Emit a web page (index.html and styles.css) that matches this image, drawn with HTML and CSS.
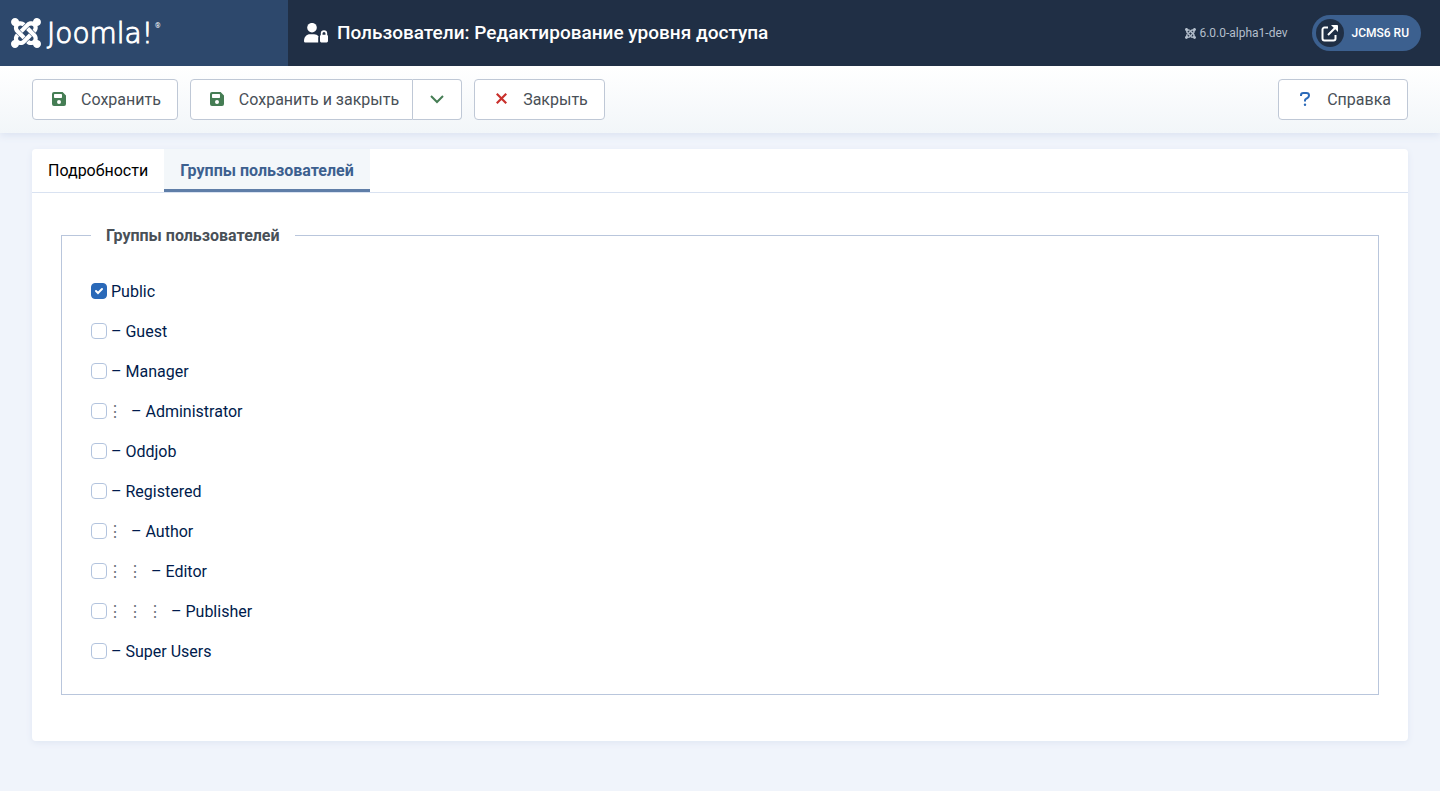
FILE: index.html
```html
<!DOCTYPE html>
<html lang="ru">
<head>
<meta charset="utf-8">
<meta name="viewport" content="width=device-width, initial-scale=1">
<title>Пользователи: Редактирование уровня доступа</title>
<link rel="stylesheet" href="styles.css">
</head>
<body>
<svg class="sprite" aria-hidden="true">
  <symbol id="joomla" viewBox="0 32 448 448"><path d="M.6 92.1C.6 58.8 27.4 32 60.4 32c30 0 54.5 21.9 59.2 50.2 32.6-7.6 67.1.6 96.5 30l-44.3 44.3c-20.5-20.5-42.6-16.3-55.4-3.5-14.3 14.3-14.3 37.9 0 52.2l99.5 99.5-44 44.3c-87.7-87.2-49.7-49.7-99.8-99.7-26.8-26.5-35-64.8-24.8-98.9C20.4 144.6.6 120.7.6 92.1zm129.5 116.4l44.3 44.3c10-10 89.7-89.7 99.7-99.8 14.3-14.3 37.6-14.3 51.9 0 12.8 12.8 17 35-3.5 55.4l44 44.3c31.2-31.2 38.5-67.6 28.9-101.2 29.2-4.1 51.9-29.2 51.9-59.5 0-33.2-26.8-60.1-59.8-60.1-30.3 0-55.4 22.5-59.5 51.6-33.8-9.9-71.7-1.5-98.3 25.1-18.3 19.1-71.1 71.5-99.6 99.9zm266.3 152.2c8.2-32.7-.9-68.5-26.3-93.9-11.8-12.2 5 4.7-99.5-99.7l-44.3 44.3 99.7 99.7c14.3 14.3 14.3 37.6 0 51.9-12.8 12.8-35 17-55.4-3.5l-44 44.3c27.6 30.2 68 38.8 102.7 28 5.5 27.4 29.7 48.1 58.9 48.1 33 0 59.8-26.8 59.8-60.1 0-30.2-22.5-55-51.6-59.1zm-84.3-53.1l-44-44.3c-87 86.4-50.4 50.4-99.7 99.8-14.3 14.3-37.6 14.3-51.9 0-13.1-13.4-16.9-35.3 3.2-55.4l-44-44.3c-30.2 30.2-38 65.2-29.5 98.3-26.7 6-46.2 29.9-46.2 58.2C0 453.2 26.8 480 59.8 480c28.6 0 52.5-19.8 58.6-46.7 32.7 8.2 68.5-.6 94.2-26 32.1-32 12.2-12.4 99.5-99.7z"/></symbol>
  <symbol id="save" viewBox="0 0 14 14"><path fill-rule="evenodd" d="M2 0h8.600l3.400 3.400V12a2 2 0 0 1-2 2H2a2 2 0 0 1-2-2V2a2 2 0 0 1 2-2zm.7 2a.7.7 0 0 0-.7.7v2.600c0 .4.300.7.7.7h6.600a.7.7 0 0 0 .7-.7V2.700a.7.7 0 0 0-.7-.7zM7 8a2 2 0 1 0 0 4 2 2 0 0 0 0-4z"/></symbol>
</svg>

<header class="header">
  <a class="logo" href="#" aria-label="Joomla!">
    <svg class="logo-mark" aria-hidden="true"><use href="#joomla"/></svg>
    <span class="logo-word">Joomla!</span><sup class="logo-reg">®</sup>
  </a>
  <div class="header-main">
    <h1 class="page-title">
      <svg class="title-icon" viewBox="0 0 24 20" aria-hidden="true"><circle cx="8" cy="4.700" r="4.800"/><path d="M0 18.200C0 14 2.600 11.300 6 11.300h4c1.900 0 3.500.8 4.600 2.200-.3.400-.4.900-.4 1.500V19.400H1.200A1.200 1.200 0 0 1 0 18.200z"/><path fill-rule="evenodd" d="M16.800 11.900v-1.400a3.200 3.200 0 0 1 6.400 0v1.400c.5.200.8.600.8 1.200v5a1.300 1.300 0 0 1-1.300 1.300h-5.400a1.300 1.300 0 0 1-1.300-1.300v-5c0-.6.300-1 .8-1.200zm1.700-.1h3v-1.300a1.500 1.500 0 0 0-3 0z"/></svg>
      Пользователи: Редактирование уровня доступа
    </h1>
    <div class="header-tools">
      <span class="version"><svg class="version-icon" aria-hidden="true"><use href="#joomla"/></svg>6.0.0-alpha1-dev</span>
      <a class="site-link" href="#">
        <span class="site-icon"><svg viewBox="0 0 17 17" aria-hidden="true"><path d="M7 2.500H3.500A2 2 0 0 0 1.500 4.500v9a2 2 0 0 0 2 2h9a2 2 0 0 0 2-2V10M7 10l7-7" fill="none" stroke="currentColor" stroke-width="2"/><path d="M10 0h6a1 1 0 0 1 1 1v6l-2.200-2.200-2.600-2.600z"/></svg></span>
        JCMS6 RU
      </a>
    </div>
  </div>
</header>

<div class="toolbar" role="toolbar" aria-label="Панель инструментов">
  <button type="button" class="btn"><span class="btn-icon green"><svg class="save-icon" aria-hidden="true"><use href="#save"/></svg></span>Сохранить</button>
  <div class="btn-group">
    <button type="button" class="btn"><span class="btn-icon green"><svg class="save-icon" aria-hidden="true"><use href="#save"/></svg></span>Сохранить и закрыть</button>
    <button type="button" class="btn btn-toggle" aria-label="Другие действия"><svg class="chevron" viewBox="0 0 14 9" aria-hidden="true"><path d="M1 1l6 6 6-6"/></svg></button>
  </div>
  <button type="button" class="btn"><span class="btn-icon red"><svg class="cross" viewBox="0 0 10 10" aria-hidden="true"><path d="M.7.7l8.600 8.600M9.300.7L.7 9.300"/></svg></span>Закрыть</button>
  <button type="button" class="btn btn-help"><span class="btn-icon blue"><svg class="question" viewBox="0 0 10 14" aria-hidden="true"><path d="M1 4V3.200C1 1.800 2 1 3.400 1h3C8 1 9 2 9 3.400c0 1-.5 1.800-1.400 2.400L6 6.800c-.7.400-1 .9-1 1.700V9.500"/><circle cx="5" cy="12.700" r="1.200"/></svg></span>Справка</button>
</div>

<main class="content">
  <div class="panel">
    <div class="tabs" role="tablist">
      <button type="button" class="tab" role="tab" aria-selected="false">Подробности</button>
      <button type="button" class="tab tab-active" role="tab" aria-selected="true">Группы пользователей</button>
    </div>
    <form class="tab-body">
      <fieldset class="groups">
        <legend class="groups-title">Группы пользователей</legend>
        <div class="group-list">
          <label class="group"><input class="check" type="checkbox" checked><span class="group-name">Public</span></label>
          <label class="group"><input class="check" type="checkbox"><span class="group-name">– Guest</span></label>
          <label class="group"><input class="check" type="checkbox"><span class="group-name">– Manager</span></label>
          <label class="group"><input class="check" type="checkbox"><span class="group-name"><span class="level">⋮</span>– Administrator</span></label>
          <label class="group"><input class="check" type="checkbox"><span class="group-name">– Oddjob</span></label>
          <label class="group"><input class="check" type="checkbox"><span class="group-name">– Registered</span></label>
          <label class="group"><input class="check" type="checkbox"><span class="group-name"><span class="level">⋮</span>– Author</span></label>
          <label class="group"><input class="check" type="checkbox"><span class="group-name"><span class="level">⋮</span><span class="level">⋮</span>– Editor</span></label>
          <label class="group"><input class="check" type="checkbox"><span class="group-name"><span class="level">⋮</span><span class="level">⋮</span><span class="level">⋮</span>– Publisher</span></label>
          <label class="group"><input class="check" type="checkbox"><span class="group-name">– Super Users</span></label>
        </div>
      </fieldset>
    </form>
  </div>
</main>
</body>
</html>
```
FILE: styles.css
```css
* { box-sizing: border-box; }

body {
  margin: 0;
  min-height: 100vh;
  background: #f0f4fb;
  color: #001b4c;
  font-family: Roboto, "Liberation Sans", sans-serif;
  font-size: 16px;
  line-height: 24px;
}

svg { display: block; fill: currentColor; }
.sprite { display: none; }

.header {
  position: relative;
  z-index: 1;
  display: flex;
  min-height: 66px;
  background: #202f45;
  color: #fff;
}

.logo {
  display: flex;
  align-items: center;
  flex: 0 0 288px;
  padding: 0 11px;
  background: #2d486c;
  color: #fff;
  text-decoration: none;
}
.logo-mark { width: 30px; height: 30px; margin-right: 6px; }
.logo-word {
  padding-top: 2px;
  font-family: "DejaVu Sans", sans-serif;
  font-size: 28px;
  font-weight: 200;
  line-height: 32px;
  -webkit-text-stroke: 1px #fff;
}
.logo-reg { align-self: flex-start; margin: 22px 0 0 2px; font-size: 7px; line-height: 8px; }

.header-main {
  display: flex;
  flex: 1;
  align-items: center;
  justify-content: space-between;
  padding: 0 19px 0 16px;
}
.page-title {
  display: flex;
  align-items: center;
  gap: 9px;
  margin: 0;
  font-size: 19px;
  font-weight: 500;
}
.title-icon { width: 24px; height: 20px; }

.header-tools { display: flex; align-items: center; gap: 24px; }
.version {
  display: flex;
  align-items: center;
  gap: 3px;
  color: #b4bfcc;
  font-size: 12px;
}
.version-icon { width: 11px; height: 11px; }
.site-link {
  display: flex;
  align-items: center;
  gap: 8px;
  height: 36px;
  padding: 0 12px 0 4px;
  border-radius: 18px;
  background: #3c608f;
  color: #fff;
  font-size: 12px;
  font-weight: 500;
  text-decoration: none;
}
.site-icon {
  display: grid;
  place-items: center;
  width: 28px;
  height: 28px;
  border-radius: 50%;
  background: #202f45;
}
.site-icon svg { width: 17px; height: 17px; }

.toolbar {
  display: flex;
  gap: 12px;
  padding: 13px 32px;
  background: linear-gradient(#fff, #f2f6f9);
  box-shadow: 0 2px 8px #d9e1f0;
}
.btn {
  display: flex;
  align-items: center;
  height: 41px;
  padding: 0 16px;
  border: 1px solid #bfc8d6;
  border-radius: 4px;
  background: #fff;
  color: #495057;
  font: inherit;
}
.btn-icon { display: grid; place-items: center; width: 20px; margin-right: 12px; padding-bottom: 2px; }
.save-icon { width: 14px; height: 14px; }
.green { color: #457d54; }
.red { color: #c9302c; }
.blue { color: #2a69b8; }
.btn-group { display: flex; }
.btn-group .btn:first-child { border-radius: 4px 0 0 4px; padding-right: 13px; }
.btn-toggle {
  justify-content: center;
  width: 49px;
  border-left: 0;
  border-radius: 0 4px 4px 0;
  color: #457d54;
}
.chevron, .cross, .question { fill: none; stroke: currentColor; stroke-width: 2; }
.chevron { flex: none; width: 14px; height: 9px; }
.cross { width: 11px; height: 11px; }
.question { width: 10px; height: 14px; }
.question circle { fill: currentColor; stroke: none; }
.btn-help { margin-left: auto; }

.content { padding: 16px 32px 48px; }
.panel {
  border-radius: 4px;
  background: #fff;
  box-shadow: 0 2px 6px #e0e7f3;
}
.tabs { display: flex; border-bottom: 1px solid #d9e2f1; }
.tab {
  height: 43px;
  padding: 0 16px;
  border: 0;
  border-radius: 4px 0 0 0;
  background: none;
  color: #000;
  font: inherit;
}
.tab-active {
  border-radius: 0;
  background: #f3f7fa;
  box-shadow: inset 0 -3px #5f7ea8;
  color: #3c608f;
  font-weight: 700;
}

.tab-body { padding: 29px 29px 46px; }
.groups {
  min-width: 0;
  margin: 0;
  padding: 0 29px 30px;
  border: 1px solid #b9c6dc;
}
.groups-title { padding: 2px 15px 0; color: #495057; font-weight: 700; }
.group-list { display: flex; flex-direction: column; align-items: flex-start; gap: 14px; padding-top: 30px; }
.group { display: flex; align-items: center; gap: 4px; }
.group-name { padding-top: 2px; }
.check {
  appearance: none;
  width: 16px;
  height: 16px;
  margin: 0;
  border: 1px solid #b3c4de;
  border-radius: 4px;
  background: #fff;
}
.check:checked {
  border-color: #2a69b8;
  background: #2a69b8 url("data:image/svg+xml,%3Csvg xmlns='http://www.w3.org/2000/svg' viewBox='0 0 14 14'%3E%3Cpath d='M4 7l2 2 4-4' fill='none' stroke='%23fff' stroke-width='2' stroke-linecap='round'/%3E%3C/svg%3E") center / 14px 14px no-repeat;
}
.level {
  display: inline-flex;
  justify-content: center;
  width: 8px;
  margin-right: 12px;
  color: #6d757e;
}
```
